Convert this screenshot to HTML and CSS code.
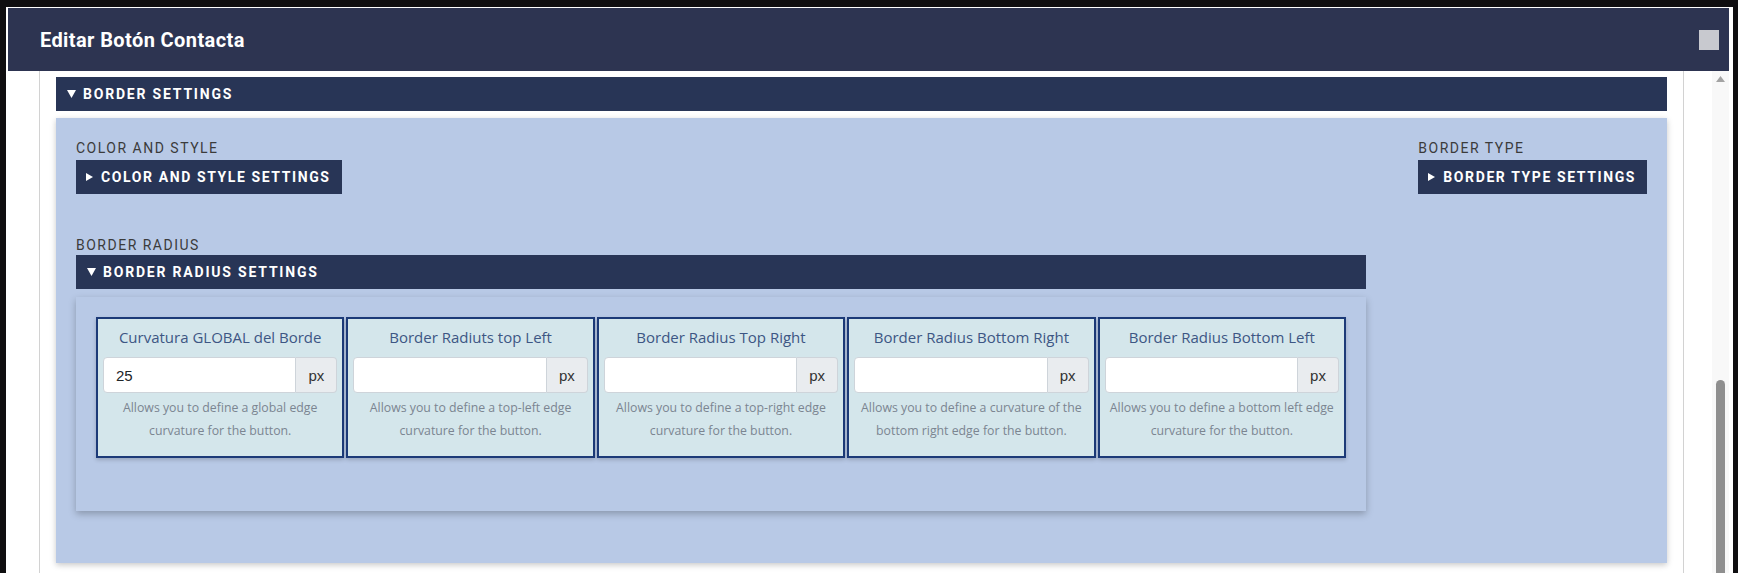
FILE: index.html
```html
<!DOCTYPE html>
<html lang="es">
<head>
<meta charset="utf-8">
<title>Editar Botón Contacta</title>
<link rel="stylesheet" href="styles.css">
</head>
<body>
<div class="page">
  <div class="modal">
    <div class="modal-header">
      <h1 class="modal-title">Editar Botón Contacta</h1>
      <span class="close-box"></span>
    </div>
    <div class="modal-body">
      <div class="scroll-area">
        <div class="container">
          <div class="bar">
            <svg class="tri-down" width="9" height="8" viewBox="0 0 9 8"><path d="M0 0H9L4.5 8Z" fill="#fff"/></svg>
            <span>BORDER SETTINGS</span>
          </div>
          <div class="panel">
            <div class="panel-row">
              <div class="col-main">
                <div class="section">
                  <div class="label">COLOR AND STYLE</div>
                  <div class="toggle">
                    <svg class="tri-right" width="7" height="8" viewBox="0 0 7 8"><path d="M0 0L7 4L0 8Z" fill="#fff"/></svg>
                    <span>COLOR AND STYLE SETTINGS</span>
                  </div>
                </div>
                <div class="section section-radius">
                  <div class="label">BORDER RADIUS</div>
                  <div class="bar bar-inner">
                    <svg class="tri-down" width="9" height="8" viewBox="0 0 9 8"><path d="M0 0H9L4.5 8Z" fill="#fff"/></svg>
                    <span>BORDER RADIUS SETTINGS</span>
                  </div>
                  <div class="subpanel">
                    <div class="cards">
                      <div class="card">
                        <div class="card-title">Curvatura GLOBAL del Borde</div>
                        <div class="input-group">
                          <input class="field" type="text" value="25">
                          <span class="addon">px</span>
                        </div>
                        <p class="help">Allows you to define a global edge curvature for the button.</p>
                      </div>
                      <div class="card">
                        <div class="card-title">Border Radiuts top Left</div>
                        <div class="input-group">
                          <input class="field" type="text" value="">
                          <span class="addon">px</span>
                        </div>
                        <p class="help">Allows you to define a top-left edge curvature for the button.</p>
                      </div>
                      <div class="card">
                        <div class="card-title">Border Radius Top Right</div>
                        <div class="input-group">
                          <input class="field" type="text" value="">
                          <span class="addon">px</span>
                        </div>
                        <p class="help">Allows you to define a top-right edge curvature for the button.</p>
                      </div>
                      <div class="card">
                        <div class="card-title">Border Radius Bottom Right</div>
                        <div class="input-group">
                          <input class="field" type="text" value="">
                          <span class="addon">px</span>
                        </div>
                        <p class="help">Allows you to define a curvature of the bottom right edge for the button.</p>
                      </div>
                      <div class="card">
                        <div class="card-title">Border Radius Bottom Left</div>
                        <div class="input-group">
                          <input class="field" type="text" value="">
                          <span class="addon">px</span>
                        </div>
                        <p class="help">Allows you to define a bottom left edge curvature for the button.</p>
                      </div>
                    </div>
                  </div>
                </div>
              </div>
              <div class="col-side">
                <div class="section">
                  <div class="label">BORDER TYPE</div>
                  <div class="toggle">
                    <svg class="tri-right" width="7" height="8" viewBox="0 0 7 8"><path d="M0 0L7 4L0 8Z" fill="#fff"/></svg>
                    <span>BORDER TYPE SETTINGS</span>
                  </div>
                </div>
              </div>
            </div>
          </div>
        </div>
      </div>
      <div class="scrollbar">
        <svg class="scroll-up" width="9" height="6" viewBox="0 0 9 6"><path d="M0 6L4.5 0L9 6Z" fill="#a3a3a3"/></svg>
        <div class="thumb"></div>
      </div>
    </div>
  </div>
</div>
</body>
</html>
```

FILE: styles.css
```css
html, body {
  margin: 0;
  padding: 0;
}

body {
  background: #0f0e10;
  height: 573px;
  overflow: hidden;
  font-family: "Open Sans", "Noto Sans", sans-serif;
}

.page {
  padding: 7px 5px 0 6px;
  height: 566px;
}

.modal {
  background: #ffffff;
  padding: 1px 4px 0 2px;
  height: 565px;
  display: flex;
  flex-direction: column;
}

.modal-header {
  height: 63px;
  background: #2d3451;
  display: flex;
  align-items: center;
  padding: 0 10px 0 32px;
  flex: 0 0 auto;
}

.modal-title {
  margin: 0;
  flex: 1;
  font-family: Roboto, "Liberation Sans", sans-serif;
  font-weight: 700;
  font-size: 20px;
  color: #ffffff;
  letter-spacing: 0.4px;
}

.close-box {
  width: 20px;
  height: 20px;
  background: #c8c9cf;
}

.modal-body {
  flex: 1;
  display: flex;
  min-height: 0;
}

.scroll-area {
  flex: 1;
  min-width: 0;
  overflow: hidden;
  padding: 0 28px 0 31px;
}

.container {
  border-left: 1px solid #d2d2d2;
  border-right: 1px solid #d2d2d2;
  padding: 6px 16px 0;
  height: 100%;
  box-sizing: border-box;
}

.scrollbar {
  width: 17px;
  background: #f8f8f8;
  display: flex;
  flex-direction: column;
  align-items: center;
  padding-top: 5px;
  box-sizing: border-box;
}

.scroll-up {
  display: block;
}

.thumb {
  width: 9px;
  margin-top: 298px;
  flex: 1;
  background: #8f8f8f;
  border-radius: 5px 5px 0 0;
}

.bar {
  height: 34px;
  background: #283556;
  color: #ffffff;
  display: flex;
  align-items: center;
  padding-left: 11px;
  font-family: Roboto, "Liberation Sans", sans-serif;
  font-weight: 700;
  font-size: 14px;
  letter-spacing: 1.8px;
  white-space: nowrap;
}

.tri-down {
  margin-right: 7px;
  flex: 0 0 auto;
}

.tri-right {
  margin-right: 8px;
  flex: 0 0 auto;
}

.panel {
  margin-top: 7px;
  background: #b8c9e6;
  padding: 20px 20px 52px;
  box-shadow: 0 2px 6px rgba(0, 0, 0, 0.22);
}

.panel-row {
  display: flex;
  align-items: flex-start;
}

.col-main {
  flex: 0 0 1290px;
  min-width: 0;
}

.col-side {
  margin-left: auto;
}

.label {
  font-family: Roboto, "Liberation Sans", sans-serif;
  font-size: 14px;
  line-height: 20px;
  letter-spacing: 1.5px;
  color: #3b3b3b;
  margin-bottom: 2px;
}

.toggle {
  display: inline-flex;
  align-items: center;
  height: 34px;
  padding: 0 11px 0 10px;
  background: #283556;
  color: #ffffff;
  font-family: Roboto, "Liberation Sans", sans-serif;
  font-weight: 700;
  font-size: 14px;
  letter-spacing: 1.6px;
  white-space: nowrap;
}

.section-radius {
  margin-top: 41px;
}

.section-radius .label {
  margin-bottom: 0;
}

.subpanel {
  margin-top: 8px;
  background: #b8c9e6;
  padding: 20px 20px 53px;
  box-shadow: 0 3px 7px rgba(0, 0, 0, 0.25);
}

.cards {
  display: grid;
  grid-template-columns: repeat(5, minmax(0, 1fr));
  column-gap: 2px;
}

.card {
  background: #d4e6eb;
  border: 2px solid #1c3a78;
  padding: 6px 5px 14px;
  text-align: center;
  box-shadow: 0 2px 4px rgba(0, 0, 0, 0.18);
  min-width: 0;
}

.card-title {
  font-size: 15px;
  line-height: 24px;
  color: #3d5684;
  white-space: nowrap;
}

.input-group {
  display: flex;
  margin-top: 8px;
  height: 36px;
}

.field {
  flex: 1 1 0;
  width: 0;
  min-width: 0;
  height: 36px;
  box-sizing: border-box;
  border: 1px solid #ced4da;
  border-radius: 4px 0 0 4px;
  background: #ffffff;
  padding: 0 12px;
  font-family: "Liberation Sans", Arial, sans-serif;
  font-size: 15px;
  color: #212529;
  outline: none;
  margin: 0;
}

.addon {
  flex: 0 0 41px;
  box-sizing: border-box;
  display: flex;
  align-items: center;
  justify-content: center;
  background: #e9ecef;
  border: 1px solid #ced4da;
  border-left: 0;
  border-radius: 0 4px 4px 0;
  font-family: "Liberation Sans", Arial, sans-serif;
  font-size: 15px;
  color: #333333;
}

.help {
  margin: 3px 0 0;
  font-size: 12.3px;
  line-height: 23px;
  color: #7b8591;
}
```
